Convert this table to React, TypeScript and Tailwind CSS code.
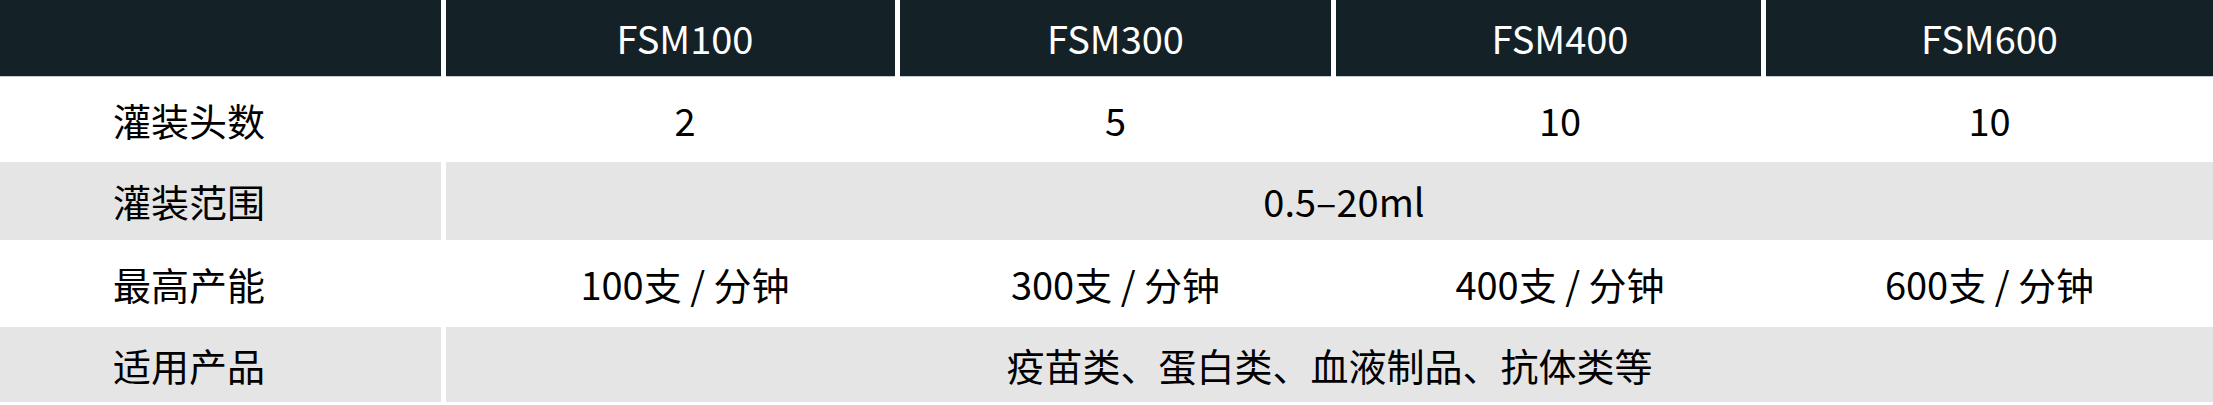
import React from "react";

const font = { fontFamily: '"Noto Sans CJK SC", "Noto Sans", sans-serif' };

export default function App() {
  const head = "bg-[#142127] text-white border-b border-[#c5cacd] h-[77px] flex items-center justify-center";
  const label = "flex items-center pl-[113px]";
  const val = "flex items-center justify-center";
  return (
    <div className="w-[2213px] h-[405px] bg-white text-black text-[38px] leading-none" style={font}>
      <div className="grid grid-cols-[441px_449px_431px_425px_447px] gap-x-[5px]">
        {/* header */}
        <div className={head}></div>
        <div className={`${head} pl-[29px]`}>FSM100</div>
        <div className={head}>FSM300</div>
        <div className={`${head} pl-[23px]`}>FSM400</div>
        <div className={head}>FSM600</div>

        {/* row 1 */}
        <div className={`${label} h-[85px] bg-white`}>灌装头数</div>
        <div className={`${val} h-[85px] bg-white pl-[29px]`}>2</div>
        <div className={`${val} h-[85px] bg-white`}>5</div>
        <div className={`${val} h-[85px] bg-white pl-[23px]`}>10</div>
        <div className={`${val} h-[85px] bg-white`}>10</div>

        {/* row 2 */}
        <div className={`${label} h-[78px] bg-[#e5e5e5]`}>灌装范围</div>
        <div className={`${val} col-span-4 h-[78px] bg-[#e5e5e5] pl-[29px]`}>0.5–20ml</div>

        {/* row 3 */}
        <div className={`${label} h-[87px] bg-white`}>最高产能</div>
        <div className={`${val} h-[87px] bg-white pl-[29px]`}>100支 / 分钟</div>
        <div className={`${val} h-[87px] bg-white`}>300支 / 分钟</div>
        <div className={`${val} h-[87px] bg-white pl-[23px]`}>400支 / 分钟</div>
        <div className={`${val} h-[87px] bg-white`}>600支 / 分钟</div>

        {/* row 4 */}
        <div className={`${label} h-[75px] bg-[#e5e5e5]`}>适用产品</div>
        <div className={`${val} col-span-4 h-[75px] bg-[#e5e5e5]`}>疫苗类、蛋白类、血液制品、抗体类等</div>
      </div>
    </div>
  );
}
